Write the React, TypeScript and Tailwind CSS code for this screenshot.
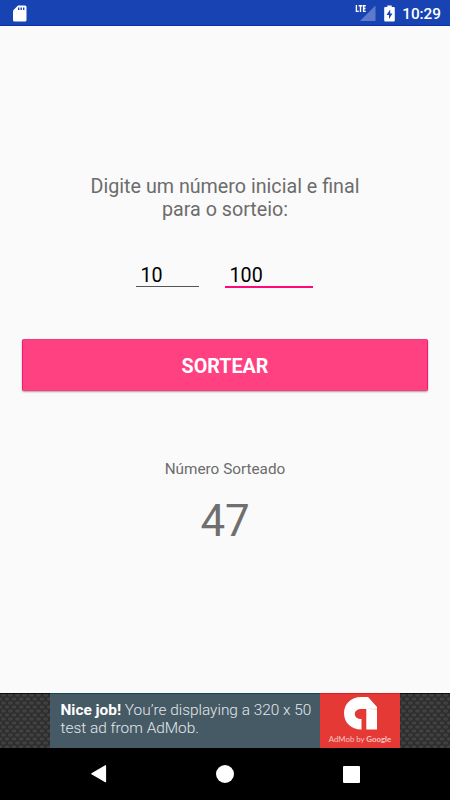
import React, { useState } from 'react';

function StatusBar() {
  return (
    <header className="flex h-[26px] shrink-0 items-center justify-between border-b border-[#0a2fae] bg-[#1843b3] pl-[13px] pr-[9px] text-white">
      <svg className="mt-px h-[17px] w-[14px]" viewBox="0 0 14 17">
        <path d="M5 0.5H12Q13.5 .5 13.5 2V15Q13.5 16.5 12 16.5H1.5Q0 16.5 0 15V5.5Z" fill="#fff" />
        <path d="M5.7 2.5V5M8.2 2.5V5M10.7 2.5V5" stroke="#1843b3" strokeWidth="1.4" />
      </svg>
      <div className="flex items-center">
        <svg className="h-[18px] w-[21px]" viewBox="0 0 21 18">
          <path d="M20.5 1.5V17H5Z" fill="#fff" opacity=".3" />
          <path d="M1.4 1V7.4H3.8M3.6 1.7H7.4M5.5 1.7V8M10.8 1.7H8.6V7.4H10.8M8.6 4.5H10.5" fill="none" stroke="#fff" strokeWidth="1.4" />
        </svg>
        <svg className="ml-[8px] mt-px h-[17px] w-[11px]" viewBox="0 0 11 17">
          <path d="M3.3 0.5H7.7V2H9.8Q10.8 2 10.8 3V15.5Q10.8 16.5 9.8 16.5H1.2Q.2 16.5 .2 15.5V3Q.2 2 1.2 2H3.3Z" fill="#fff" />
          <path d="M6.2 4.5L2.5 10H5V14L8.5 8.5H6.2Z" fill="#1843b3" />
        </svg>
        <span className="ml-[7.3px] mt-[3px] text-[15.3px] leading-[18px] font-medium">10:29</span>
      </div>
    </header>
  );
}

function AdBanner() {
  return (
    <div className="flex h-[55px] shrink-0 justify-center bg-[#2c2c2c]">
      <Mesh id="mesh-left" />
      <div className="flex h-full w-[270px] flex-col border-t border-[#164452] bg-[#465a65] pl-[10.5px] pt-[7px] text-[15.4px] leading-[18.5px] font-light text-[#e3e8ea]">
        <p className="whitespace-nowrap"><b className="font-bold text-white">Nice job!</b> You’re displaying a 320 x 50</p>
        <p className="-mt-[0.5px] whitespace-nowrap">test ad from AdMob.</p>
      </div>
      <div className="flex h-full w-[80px] flex-col items-center border-t border-[#d61f1f] bg-[#e53935] pt-[3px]">
        <svg className="ml-[2px] h-[33px] w-[34px]" viewBox="0 0 34 33">
          <path d="M17 0H24L33 10V32.5H22.3V12H17.5C13.5 12 10.8 14 10.8 17C10.8 20 13.5 22 17.5 22V32.5C7 32.5 0 25.5 0 16.3C0 7 7 0 17 0Z" fill="#fff" />
          <path d="M22.3 11.5H33V13Z" fill="#e8dcdc" />
        </svg>
        <p className="mt-[3.5px] whitespace-nowrap font-[Lato,sans-serif] text-[7.8px] leading-[10px] text-[#f9c5c3]">AdMob by <span className="font-bold">Google</span></p>
      </div>
      <Mesh id="mesh-right" />
    </div>
  );
}

function Mesh({ id }: { id: string }) {
  return (
    <svg className="h-[55px] w-[50px]" viewBox="0 0 50 55">
      <defs>
        <pattern id={id} width="7" height="8" patternUnits="userSpaceOnUse">
          <rect width="7" height="8" fill="#2d2d2d" />
          <ellipse cx="3.5" cy="2" rx="2.5" ry="1.8" fill="#414141" />
          <ellipse cx="0" cy="6" rx="2.5" ry="1.8" fill="#414141" />
          <ellipse cx="7" cy="6" rx="2.5" ry="1.8" fill="#414141" />
        </pattern>
      </defs>
      <rect width="50" height="55" fill={`url(#${id})`} />
      <rect width="50" height="1" fill="#0c0c0c" />
    </svg>
  );
}

function NavBar() {
  return (
    <nav className="flex h-[52px] shrink-0 items-center justify-between bg-black px-[90px]">
      <button aria-label="Voltar">
        <svg className="h-[20px] w-[17px]" viewBox="0 0 17 20">
          <path d="M15.5 1.7V17.7L1.8 9.7Z" fill="#fff" stroke="#fff" strokeWidth="1.2" strokeLinejoin="round" />
        </svg>
      </button>
      <button aria-label="Início" className="h-[18px] w-[18px] rounded-full bg-white" />
      <button aria-label="Recentes" className="h-[17px] w-[17px] rounded-[1px] bg-white" />
    </nav>
  );
}

export default function App() {
  const [start, setStart] = useState('10');
  const [end, setEnd] = useState('100');
  const [result, setResult] = useState(47);

  const draw = () => {
    const min = Number(start);
    const max = Number(end);
    if (max < min) return;
    setResult(Math.floor(Math.random() * (max - min + 1)) + min);
  };

  return (
    <div className="flex h-[800px] w-[450px] flex-col overflow-hidden bg-[#fafafa] font-[Roboto,sans-serif]">
      <StatusBar />

      <main className="flex flex-1 flex-col items-center pt-[149px]">
        <p className="text-center text-[19.7px] leading-[23px] text-[#6c6c6c]">
          Digite um número inicial e final<br />para o sorteio:
        </p>

        <div className="mt-[37px] flex h-[30px] w-full items-start gap-[26px] pl-[136px]">
          <input
            value={start}
            onChange={e => setStart(e.target.value)}
            className="h-[29px] w-[63px] border-b border-[#555] pl-[4.5px] pt-[6px] pb-0 text-[19.7px] leading-[22px] text-black outline-none"
          />
          <input
            value={end}
            onChange={e => setEnd(e.target.value)}
            className="h-[30px] w-[88px] border-b-2 border-[#ff0877] pl-[4.5px] pt-[6px] pb-0 text-[19.7px] leading-[22px] text-black outline-none"
          />
        </div>

        <button
          onClick={draw}
          className="mt-[51px] h-[52px] w-[406px] rounded-[2px] border border-t-[#e93c79] border-x-[#f51674] border-b-[#ff3b7c] bg-[#ff4081] pt-[4px] text-[19.7px] font-bold text-white shadow-[0_1px_2px_rgba(0,0,0,0.35)]"
        >
          SORTEAR
        </button>

        <p className="mt-[69px] text-[15.3px] leading-[18px] text-[#6c6c6c]">Número Sorteado</p>
        <p className="mt-[18px] text-[43.8px] leading-[51px] text-[#6f6f6f]">{result}</p>
      </main>

      <AdBanner />
      <NavBar />
    </div>
  );
}
